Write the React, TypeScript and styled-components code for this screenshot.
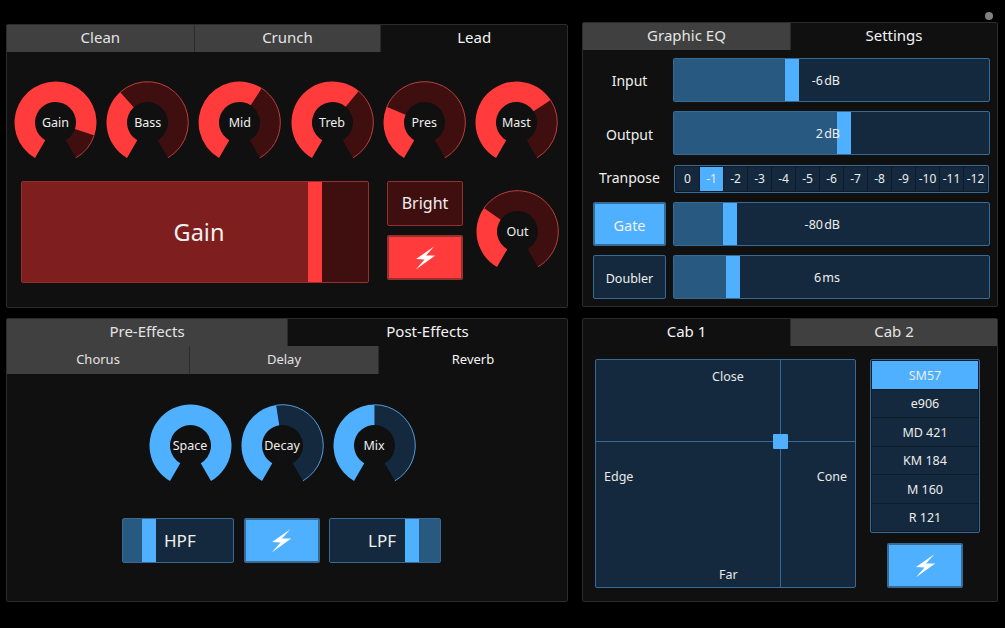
import styled, { createGlobalStyle } from "styled-components";

const RED = {
  bright: "#ff3b3b",
  mid: "#7f1e1e",
  dark: "#3f0f0f",
  line: "#96302f",
  rim: "#b5403d",
};

const BLUE = {
  bright: "#4fb0ff",
  mid: "#275981",
  dark: "#14293d",
  line: "#376a94",
  rim: "#4f9bd8",
};

type Palette = typeof RED;

const GlobalStyle = createGlobalStyle`
  html, body {
    margin: 0;
    padding: 0;
    background: #000;
  }
  * {
    box-sizing: border-box;
  }
`;

const Page = styled.div`
  position: relative;
  width: 1005px;
  height: 628px;
  background: #000;
  color: #f0f0f0;
  font-family: "Noto Sans", "Open Sans", sans-serif;
  display: flex;
  gap: 14px;
  padding-left: 6px;
  overflow: hidden;
`;

const StatusDot = styled.div`
  position: absolute;
  top: 12px;
  left: 985px;
  width: 8px;
  height: 8px;
  border-radius: 50%;
  background: #808080;
`;

const Column = styled.div<{ $width: number; $top: number; $gap: number }>`
  width: ${(p) => p.$width}px;
  padding-top: ${(p) => p.$top}px;
  display: flex;
  flex-direction: column;
  gap: ${(p) => p.$gap}px;
`;

const Panel = styled.section<{ $height: number }>`
  height: ${(p) => p.$height}px;
  background: #101010;
  border: 1px solid #2c2c2c;
  border-radius: 2px;
  display: flex;
  flex-direction: column;
`;

const Tabs = styled.div<{ $columns: string; $height: number }>`
  display: grid;
  grid-template-columns: ${(p) => p.$columns};
  height: ${(p) => p.$height}px;
  flex: none;
`;

const Tab = styled.div<{ $active?: boolean; $sub?: boolean }>`
  display: flex;
  align-items: center;
  justify-content: center;
  padding-bottom: ${(p) => (p.$sub ? 2 : 3)}px;
  font-size: ${(p) => (p.$sub ? 13 : 15)}px;
  background: ${(p) => (p.$active ? "transparent" : "#404040")};
  color: ${(p) => (p.$active ? "#f4f4f4" : "#e4e4e4")};
  & + & {
    border-left: 1px solid #2b2b2b;
  }
`;

const KnobRow = styled.div<{ $gap: number; $shift?: number }>`
  display: flex;
  gap: ${(p) => p.$gap}px;
  margin-left: ${(p) => p.$shift ?? 0}px;
`;

const KnobWrap = styled.div`
  position: relative;
  width: 83px;
  height: 83px;
  flex: none;
`;

const KnobLabel = styled.span`
  position: absolute;
  inset: 0;
  display: flex;
  align-items: center;
  justify-content: center;
  font-size: 12.5px;
  color: #efefef;
`;

const AmpBody = styled.div`
  padding: 29px 0 0 7px;
  display: flex;
  flex-direction: column;
  gap: 17px;
`;

const AmpControls = styled.div`
  display: flex;
  padding-left: 7px;
`;

const ButtonStack = styled.div`
  margin: 0 13px 0 18px;
  display: flex;
  flex-direction: column;
  gap: 9px;
`;

const Box = styled.div<{
  $w: number;
  $h: number;
  $bg: string;
  $line: string;
  $size?: number;
  $pad?: string;
  $thick?: boolean;
}>`
  width: ${(p) => p.$w}px;
  height: ${(p) => p.$h}px;
  flex: none;
  background: ${(p) => p.$bg};
  border: ${(p) => (p.$thick ? 2 : 1)}px solid ${(p) => p.$line};
  border-radius: 2px;
  display: flex;
  align-items: center;
  justify-content: center;
  padding: ${(p) => p.$pad ?? "0"};
  font-size: ${(p) => p.$size ?? 15}px;
  color: #f0f0f0;
`;

const OutKnob = styled.div`
  margin-top: 8.5px;
`;

const SliderTrack = styled.div<{ $w?: number; $h: number; $c: Palette }>`
  position: relative;
  width: ${(p) => (p.$w ? `${p.$w}px` : "100%")};
  height: ${(p) => p.$h}px;
  flex: none;
  display: flex;
  background: ${(p) => p.$c.dark};
  border: 1px solid ${(p) => p.$c.line};
  border-radius: 2px;
`;

const SliderFill = styled.div<{ $w: number; $c: Palette }>`
  width: ${(p) => p.$w}px;
  background: ${(p) => p.$c.mid};
`;

const SliderHandle = styled.div<{ $c: Palette }>`
  width: 14px;
  background: ${(p) => p.$c.bright};
`;

const SliderText = styled.span<{ $size: number; $align?: string; $pad?: string }>`
  position: absolute;
  inset: 0;
  display: flex;
  align-items: center;
  justify-content: ${(p) => p.$align ?? "center"};
  padding: ${(p) => p.$pad ?? "0"};
  font-size: ${(p) => p.$size}px;
  word-spacing: -2px;
  color: #efefef;
`;

const SettingsBody = styled.div`
  margin-top: 8px;
  padding: 0 7px 0 10px;
  display: grid;
  grid-template-columns: 73px 1fr;
  grid-template-rows: 44px 44px 28px 44px 44px;
  column-gap: 7px;
  row-gap: 9.25px;
  align-items: center;
`;

const RowLabel = styled.div<{ $nudge: number }>`
  margin-top: ${(p) => p.$nudge}px;
  text-align: center;
  font-size: 14px;
  white-space: nowrap;
  color: #efefef;
`;

const Stepper = styled.div`
  margin: 0 1px;
  height: 28px;
  padding: 1px;
  display: grid;
  grid-template-columns: repeat(13, 1fr);
  background: #0d1c2a;
  border: 1px solid ${BLUE.line};
  border-radius: 2px;
  gap: 1px;
`;

const Step = styled.div<{ $active?: boolean }>`
  display: flex;
  align-items: center;
  justify-content: center;
  font-size: 12px;
  background: ${(p) => (p.$active ? BLUE.bright : BLUE.dark)};
  color: #ececec;
`;

const EffectsBody = styled.div`
  padding: 30px 11px 0 0;
  display: flex;
  flex-direction: column;
  align-items: center;
  gap: 31px;
`;

const FilterRow = styled.div`
  display: flex;
  gap: 9.5px;
`;

const CabBody = styled.div`
  margin-top: 13px;
  padding-left: 12px;
  display: flex;
  gap: 14px;
`;

const XYPad = styled.div`
  position: relative;
  width: 261px;
  height: 229px;
  background: ${BLUE.dark};
  border: 1px solid ${BLUE.line};
  border-radius: 2px;
`;

const PadLineV = styled.div`
  position: absolute;
  top: 0;
  bottom: 0;
  left: 184px;
  width: 1px;
  background: ${BLUE.line};
`;

const PadLineH = styled.div`
  position: absolute;
  left: 0;
  right: 0;
  top: 81px;
  height: 1px;
  background: ${BLUE.line};
`;

const PadHandle = styled.div`
  position: absolute;
  left: 177px;
  top: 74px;
  width: 15px;
  height: 15px;
  background: ${BLUE.bright};
  border-radius: 1px;
`;

const PadLabel = styled.span<{ $x: string; $y: number }>`
  position: absolute;
  top: ${(p) => p.$y}px;
  ${(p) => p.$x};
  font-size: 12.5px;
  line-height: 16px;
  color: #e8e8e8;
`;

const MicColumn = styled.div`
  width: 110px;
  display: flex;
  flex-direction: column;
  align-items: center;
  gap: 10px;
`;

const MicList = styled.div`
  width: 110px;
  height: 174px;
  padding: 1px;
  display: flex;
  flex-direction: column;
  gap: 1px;
  background: #0d1c2a;
  border: 1px solid ${BLUE.line};
  border-radius: 2px;
`;

const Mic = styled.div<{ $active?: boolean }>`
  flex: 1;
  display: flex;
  align-items: center;
  justify-content: center;
  padding-top: 1px;
  font-size: 12.5px;
  background: ${(p) => (p.$active ? BLUE.bright : BLUE.dark)};
  color: #ececec;
`;

const BoltSvg = styled.svg`
  width: 21px;
  height: 24px;
`;

const polar = (r: number, deg: number) => {
  const rad = (deg * Math.PI) / 180;
  return [41.5 + r * Math.sin(rad), 41.5 - r * Math.cos(rad)]
    .map((n) => n.toFixed(2))
    .join(" ");
};

const ringPath = (from: number, to: number) => {
  const large = to - from > 180 ? 1 : 0;
  return `M${polar(41, from)} A41 41 0 ${large} 1 ${polar(41, to)} L${polar(20.5, to)} A20.5 20.5 0 ${large} 0 ${polar(20.5, from)} Z`;
};

const rimPath = (from: number, to: number) => {
  const large = to - from > 180 ? 1 : 0;
  return `M${polar(40.8, from)} A40.8 40.8 0 ${large} 1 ${polar(40.8, to)}`;
};

const Knob = (props: { label: string; value: number; c: Palette }) => {
  const { label, value, c } = props;
  const angle = -150 + 300 * value;
  return (
    <KnobWrap>
      <svg width="83" height="83" viewBox="0 0 83 83">
        {value < 1 && <path d={ringPath(angle, 150)} fill={c.dark} />}
        {value < 1 && (
          <path d={rimPath(angle, 150)} fill="none" stroke={c.rim} strokeWidth="1" />
        )}
        <path d={ringPath(-150, angle)} fill={c.bright} />
      </svg>
      <KnobLabel>{label}</KnobLabel>
    </KnobWrap>
  );
};

const Bolt = () => (
  <BoltSvg viewBox="0 0 19 22">
    <path d="M17.6 0.3 L0.8 12 L8.6 12.4 L0.6 21.6 L18.4 8.8 L10 8.6 Z" fill="#fff" />
  </BoltSvg>
);

const BoltButton = (props: { c: Palette }) => (
  <Box $w={76} $h={45} $bg={props.c.bright} $line={props.c.line} $thick>
    <Bolt />
  </Box>
);

const ampKnobs = [
  { label: "Gain", value: 0.862 },
  { label: "Bass", value: 0.36 },
  { label: "Mid", value: 0.61 },
  { label: "Treb", value: 0.633 },
  { label: "Pres", value: 0.275 },
  { label: "Mast", value: 0.689 },
];

const fxKnobs = [
  { label: "Space", value: 1 },
  { label: "Decay", value: 0.47 },
  { label: "Mix", value: 0.5 },
];

const steps = ["0", "-1", "-2", "-3", "-4", "-5", "-6", "-7", "-8", "-9", "-10", "-11", "-12"];
const mics = ["SM57", "e906", "MD 421", "KM 184", "M 160", "R 121"];

const SettingSlider = (props: { fill: number; text: string }) => (
  <SliderTrack $h={44} $c={BLUE}>
    <SliderFill $w={props.fill} $c={BLUE} />
    <SliderHandle $c={BLUE} />
    <SliderText $size={12.5} $align="flex-end" $pad="1px 149px 0 0">
      {props.text}
    </SliderText>
  </SliderTrack>
);

export default function App() {
  return (
    <>
      <GlobalStyle />
      <Page>
        <StatusDot />
        <Column $width={562} $top={24} $gap={10}>
          <Panel $height={284}>
            <Tabs $columns="1fr 1fr 1fr" $height={27}>
              <Tab>Clean</Tab>
              <Tab>Crunch</Tab>
              <Tab $active>Lead</Tab>
            </Tabs>
            <AmpBody>
              <KnobRow $gap={9.2}>
                {ampKnobs.map((k) => (
                  <Knob key={k.label} label={k.label} value={k.value} c={RED} />
                ))}
              </KnobRow>
              <AmpControls>
                <SliderTrack $w={348} $h={102} $c={RED}>
                  <SliderFill $w={286} $c={RED} />
                  <SliderHandle $c={RED} />
                  <SliderText $size={23.5} $pad="0 0 1px 8px">
                    Gain
                  </SliderText>
                </SliderTrack>
                <ButtonStack>
                  <Box $w={76} $h={45} $bg={RED.dark} $line={RED.line} $size={16} $pad="0 0 1px">
                    Bright
                  </Box>
                  <BoltButton c={RED} />
                </ButtonStack>
                <OutKnob>
                  <Knob label="Out" value={0.317} c={RED} />
                </OutKnob>
              </AmpControls>
            </AmpBody>
          </Panel>
          <Panel $height={284}>
            <Tabs $columns="1fr 1fr" $height={27}>
              <Tab>Pre-Effects</Tab>
              <Tab $active>Post-Effects</Tab>
            </Tabs>
            <Tabs $columns="182fr 189fr 189fr" $height={28}>
              <Tab $sub>Chorus</Tab>
              <Tab $sub>Delay</Tab>
              <Tab $active $sub>
                Reverb
              </Tab>
            </Tabs>
            <EffectsBody>
              <KnobRow $gap={9} $shift={1}>
                {fxKnobs.map((k) => (
                  <Knob key={k.label} label={k.label} value={k.value} c={BLUE} />
                ))}
              </KnobRow>
              <FilterRow>
                <SliderTrack $w={112} $h={45} $c={BLUE}>
                  <SliderFill $w={19} $c={BLUE} />
                  <SliderHandle $c={BLUE} />
                  <SliderText $size={17} $align="flex-start" $pad="0 0 0 41px">
                    HPF
                  </SliderText>
                </SliderTrack>
                <BoltButton c={BLUE} />
                <SliderTrack $w={112} $h={45} $c={BLUE}>
                  <SliderFill $w={74.5} $c={{ ...BLUE, mid: BLUE.dark }} />
                  <SliderHandle $c={BLUE} />
                  <SliderFill $w={21.5} $c={BLUE} />
                  <SliderText $size={17} $align="flex-end" $pad="0 44px 0 0">
                    LPF
                  </SliderText>
                </SliderTrack>
              </FilterRow>
            </EffectsBody>
          </Panel>
        </Column>
        <Column $width={416} $top={22} $gap={11}>
          <Panel $height={285}>
            <Tabs $columns="1fr 1fr" $height={27}>
              <Tab>Graphic EQ</Tab>
              <Tab $active>Settings</Tab>
            </Tabs>
            <SettingsBody>
              <RowLabel $nudge={1}>Input</RowLabel>
              <SettingSlider fill={111} text="-6 dB" />
              <RowLabel $nudge={3}>Output</RowLabel>
              <SettingSlider fill={162.5} text="2 dB" />
              <RowLabel $nudge={-3}>Tranpose</RowLabel>
              <Stepper>
                {steps.map((s) => (
                  <Step key={s} $active={s === "-1"}>
                    {s}
                  </Step>
                ))}
              </Stepper>
              <Box $w={73} $h={44} $bg={BLUE.bright} $line={BLUE.line} $size={14.5} $pad="3px 0 0" $thick>
                Gate
              </Box>
              <SettingSlider fill={49} text="-80 dB" />
              <Box $w={73} $h={44} $bg={BLUE.dark} $line={BLUE.line} $size={12.5} $pad="3px 0 0">
                Doubler
              </Box>
              <SettingSlider fill={51.5} text="6 ms" />
            </SettingsBody>
          </Panel>
          <Panel $height={284}>
            <Tabs $columns="1fr 1fr" $height={27}>
              <Tab $active>Cab 1</Tab>
              <Tab>Cab 2</Tab>
            </Tabs>
            <CabBody>
              <XYPad>
                <PadLineV />
                <PadLineH />
                <PadHandle />
                <PadLabel $x="left: 116px;" $y={9}>
                  Close
                </PadLabel>
                <PadLabel $x="left: 8px;" $y={109}>
                  Edge
                </PadLabel>
                <PadLabel $x="right: 8px;" $y={109}>
                  Cone
                </PadLabel>
                <PadLabel $x="left: 123px;" $y={207}>
                  Far
                </PadLabel>
              </XYPad>
              <MicColumn>
                <MicList>
                  {mics.map((m) => (
                    <Mic key={m} $active={m === "SM57"}>
                      {m}
                    </Mic>
                  ))}
                </MicList>
                <BoltButton c={BLUE} />
              </MicColumn>
            </CabBody>
          </Panel>
        </Column>
      </Page>
    </>
  );
}
